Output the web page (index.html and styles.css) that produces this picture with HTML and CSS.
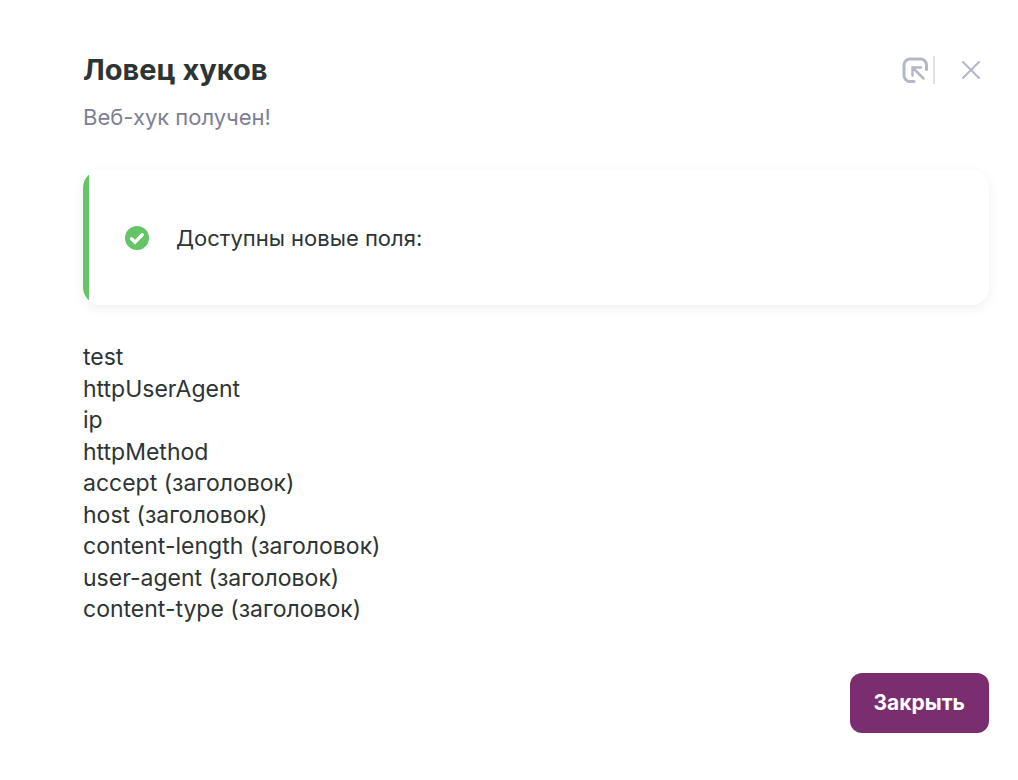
FILE: index.html
```html
<!DOCTYPE html>
<html lang="ru">
<head>
<meta charset="utf-8">
<title>Ловец хуков</title>
<link rel="stylesheet" href="styles.css">
</head>
<body>
<main class="dialog">
  <header class="header">
    <div>
      <h1 class="title">Ловец хуков</h1>
      <p class="subtitle">Веб-хук получен!</p>
    </div>
    <div class="actions">
      <button class="icon-button expand" type="button" aria-label="Развернуть">
        <svg width="28" height="28" viewBox="0 0 28 28" fill="none" stroke="currentColor" stroke-linecap="round"><path d="M13 25.500H9A6 6 0 0 1 3 19.500V9A6 6 0 0 1 9 3h10.500A6 6 0 0 1 25.500 9v4.500" stroke-width="3"/><path d="M11.500 19.500v-8H20M12 12l10.500 10.500" stroke-width="2.500"/></svg>
      </button>
      <button class="icon-button close" type="button" aria-label="Закрыть окно">
        <svg width="20" height="20" viewBox="0 0 20 20" fill="none" stroke="currentColor" stroke-width="2" stroke-linecap="round"><path d="M2 2l16 16M18 2L2 18"/></svg>
      </button>
    </div>
  </header>
  <section class="notice">
    <svg width="24" height="24" viewBox="0 0 24 24" fill="none"><circle cx="12" cy="12" r="12" fill="#65c466"/><path d="M6.500 12.800l3.500 3.300 7.300-7.300" stroke="#fff" stroke-width="3.400" stroke-linecap="round"/></svg>
    <p class="notice-text">Доступны новые поля:</p>
  </section>
  <ul class="fields">
    <li>test</li>
    <li>httpUserAgent</li>
    <li>ip</li>
    <li>httpMethod</li>
    <li>accept (заголовок)</li>
    <li>host (заголовок)</li>
    <li>content-length (заголовок)</li>
    <li>user-agent (заголовок)</li>
    <li>content-type (заголовок)</li>
  </ul>
  <footer class="footer">
    <button class="primary" type="button">Закрыть</button>
  </footer>
</main>
</body>
</html>
```
FILE: styles.css
```css
* { box-sizing: border-box; }
body {
  margin: 0;
  background: #fff;
  color: #2d3434;
  font-family: Inter, "Noto Sans", sans-serif;
  font-size: 22px;
}
h1, p, ul { margin: 0; padding: 0; }
.dialog { padding: 50px 29px 47px 83px; }
.header { display: flex; justify-content: space-between; }
.title { font-size: 29px; line-height: 40px; font-weight: 700; }
.subtitle { margin-top: 12px; line-height: 30px; color: #7d8094; }
.actions { display: flex; align-items: center; height: 40px; padding-right: 8px; }
.icon-button { display: flex; padding: 0; border: 0; background: none; color: #b4b7c7; cursor: pointer; }
.expand { padding-right: 4px; border-right: 2px solid #dfe1e8; }
.close { margin-left: 26px; }
.notice {
  display: flex;
  align-items: center;
  gap: 27px;
  margin-top: 38px;
  padding: 52px 42px 51px;
  background: linear-gradient(to right, #65c466 6px, #fff 6px);
  border-radius: 18px;
  box-shadow: 0 3px 12px rgba(40, 40, 60, 0.07);
}
.notice-text { line-height: 32px; }
.fields { margin-top: 37px; list-style: none; font-size: 23px; line-height: 1.37; }
.footer { display: flex; justify-content: flex-end; margin-top: 47px; }
.primary {
  height: 60px;
  padding: 0 24px;
  border: 0;
  border-radius: 12px;
  background: #7a2e70;
  color: #fff;
  font: inherit;
  font-size: 21px;
  font-weight: 700;
  cursor: pointer;
}
```
